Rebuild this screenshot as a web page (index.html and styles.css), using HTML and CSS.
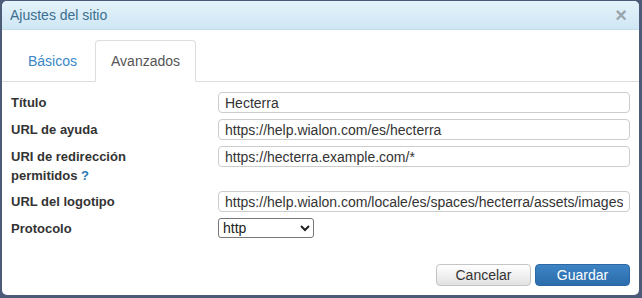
FILE: index.html
```html
<!DOCTYPE html>
<html>
  <head>
    <title>Ajustes del sitio</title>
    <link rel="stylesheet" href="styles.css">
  </head>
  <body>
    <div class="dialog">
      <div class="dialog-header">
        <span class="dialog-title">Ajustes del sitio</span>
        <span class="close">&times;</span>
      </div>

      <ul class="tabs">
        <li class="tab"><a href="#">Básicos</a></li>
        <li class="tab active"><a href="#">Avanzados</a></li>
      </ul>

      <div class="form">
        <label class="label">Título</label>
        <input class="field" type="text" value="Hecterra">

        <label class="label">URL de ayuda</label>
        <input class="field" type="text" value="https://help.wialon.com/es/hecterra">

        <label class="label label-wrap">URI de redirección permitidos <span class="help">?</span></label>
        <input class="field" type="text" value="https://hecterra.example.com/*">

        <label class="label">URL del logotipo</label>
        <input class="field" type="text" value="https://help.wialon.com/locale/es/spaces/hecterra/assets/images/logo.png">

        <label class="label">Protocolo</label>
        <div>
          <select class="select">
            <option>http</option>
            <option>https</option>
          </select>
        </div>
      </div>

      <div class="dialog-footer">
        <button class="btn">Cancelar</button>
        <button class="btn btn-primary">Guardar</button>
      </div>
    </div>
  </body>
</html>
```

FILE: styles.css
```css
html,
body {
  height: 100%;
}

body {
  margin: 0;
  padding: 1px 3px 3px 2px;
  box-sizing: border-box;
  background-color: #4b5b78;
  font-family: "Liberation Sans", Arial, sans-serif;
  font-size: 14px;
  color: #333;
}

.dialog {
  height: 100%;
  display: flex;
  flex-direction: column;
  background-color: #fff;
  border-radius: 5px;
  overflow: hidden;
}

.dialog-header {
  display: flex;
  justify-content: space-between;
  align-items: center;
  height: 28px;
  padding: 0 12px 0 8px;
  background: linear-gradient(#e4f2fa, #cfe7f4);
  border-bottom: 1px solid #c4dbe8;
}

.dialog-title {
  color: #3b6e8f;
  font-size: 14px;
}

.close {
  color: #9aa6ad;
  font-size: 20px;
  font-weight: bold;
  line-height: 1;
}

.tabs {
  display: flex;
  margin: 10px 0 0;
  padding: 0 0 0 10px;
  list-style: none;
  border-bottom: 1px solid #ddd;
}

.tab {
  margin-right: 2px;
  margin-bottom: -1px;
}

.tab a {
  display: block;
  padding: 10px 15px;
  line-height: 20px;
  border: 1px solid transparent;
  border-radius: 4px 4px 0 0;
  color: #3a87c8;
  text-decoration: none;
}

.tab.active a {
  color: #555;
  background-color: #fff;
  border-color: #ddd #ddd transparent;
}

.form {
  display: grid;
  grid-template-columns: 207px 1fr;
  row-gap: 6px;
  align-items: start;
  padding: 10px 9px 0 9px;
}

.label {
  padding: 1px 40px 0 0;
  font-size: 13px;
  font-weight: bold;
  line-height: 19px;
}

.help {
  color: #2a7ab5;
}

.field {
  display: block;
  width: 100%;
  height: 21px;
  box-sizing: border-box;
  padding: 0 6px;
  border: 1px solid #ccc;
  border-radius: 4px;
  font-family: inherit;
  font-size: 14px;
  color: #333;
}

.select {
  display: block;
  width: 96px;
  height: 20px;
  font-family: inherit;
  font-size: 14px;
  color: #222;
  border: 1px solid #777;
  border-radius: 3px;
  background-color: #fff;
}

.dialog-footer {
  display: flex;
  justify-content: flex-end;
  gap: 4px;
  margin-top: auto;
  padding: 0 9px 9px;
}

.btn {
  width: 95px;
  height: 22px;
  padding: 0;
  font-family: inherit;
  font-size: 14px;
  color: #333;
  background: linear-gradient(#fff, #e2e2e2);
  border: 1px solid #c4c4c4;
  border-radius: 4px;
  cursor: pointer;
}

.btn-primary {
  color: #fff;
  background: linear-gradient(#3d84c4, #2b6cac);
  border-color: #2c68a3;
}
```
